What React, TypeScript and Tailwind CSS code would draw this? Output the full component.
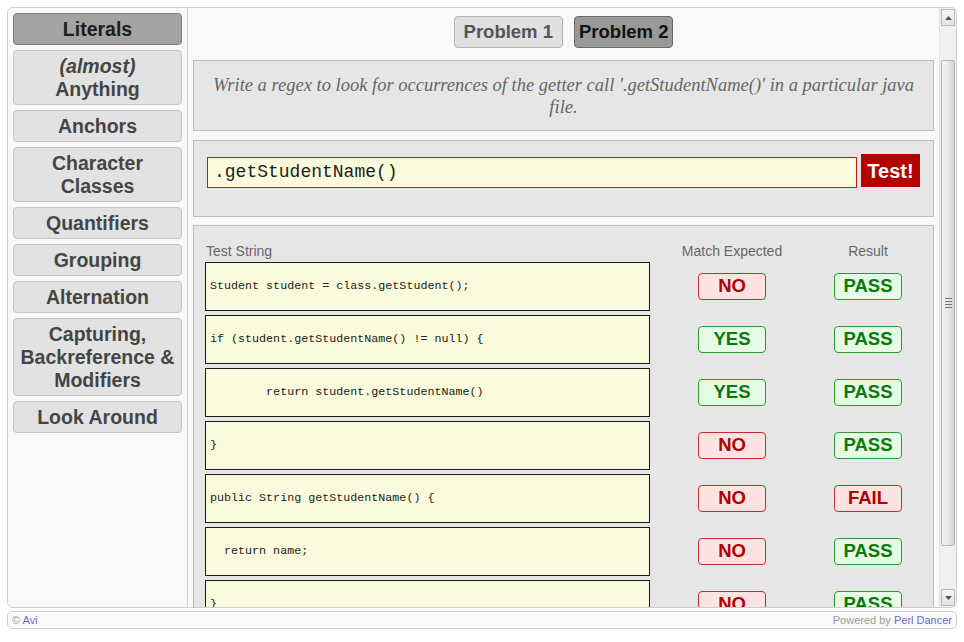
import React from "react";

type Row = { text: string; expected: "YES" | "NO"; result: "PASS" | "FAIL" };

const rows: Row[] = [
  { text: "Student student = class.getStudent();", expected: "NO", result: "PASS" },
  { text: "if (student.getStudentName() != null) {", expected: "YES", result: "PASS" },
  { text: "        return student.getStudentName()", expected: "YES", result: "PASS" },
  { text: "}", expected: "NO", result: "PASS" },
  { text: "public String getStudentName() {", expected: "NO", result: "FAIL" },
  { text: "  return name;", expected: "NO", result: "PASS" },
  { text: "}", expected: "NO", result: "PASS" },
];

const topics: React.ReactNode[] = [
  "Anchors",
  <>Character<br />Classes</>,
  "Quantifiers",
  "Grouping",
  "Alternation",
  <>Capturing,<br />Backreference &amp;<br />Modifiers</>,
  "Look Around",
];

const Badge = ({ label }: { label: string }) => {
  const good = label === "YES" || label === "PASS";
  return (
    <div
      className={
        "w-[68px] h-[27px] rounded-[4px] border flex items-center justify-center text-[18.5px] font-bold leading-none " +
        (good
          ? "bg-[#e6fbe6] border-[#2a9a2a] text-[#0a7a0a]"
          : "bg-[#fde2e2] border-[#c03030] text-[#b00000]")
      }
    >
      {label}
    </div>
  );
};

const Scrollbar = () => (
  <div className="w-[17px] h-full flex flex-col bg-[#f0f0f0] border-l border-[#e2e2e2]">
    <div className="h-[17px] mx-[1px] mt-[1px] border border-[#b8b8b8] bg-gradient-to-b from-[#f8f8f8] to-[#e2e2e2] flex items-center justify-center">
      <svg width="7" height="4" viewBox="0 0 7 4">
        <path d="M0 4 L3.5 0 L7 4 Z" fill="#555" />
      </svg>
    </div>
    <div className="h-[34px]" />
    <div className="h-[486px] mx-[1px] rounded-[2px] border border-[#b4b4b4] bg-gradient-to-r from-[#f4f4f4] via-[#e8e8e8] to-[#d4d4d4] flex items-center justify-center">
      <div className="flex flex-col gap-[2px]">
        <div className="w-[7px] h-px bg-[#777]" />
        <div className="w-[7px] h-px bg-[#777]" />
        <div className="w-[7px] h-px bg-[#777]" />
        <div className="w-[7px] h-px bg-[#777]" />
      </div>
    </div>
    <div className="flex-1" />
    <div className="h-[17px] mx-[1px] mb-[1px] border border-[#b8b8b8] bg-gradient-to-b from-[#f8f8f8] to-[#e2e2e2] flex items-center justify-center">
      <svg width="7" height="4" viewBox="0 0 7 4">
        <path d="M0 0 L3.5 4 L7 0 Z" fill="#555" />
      </svg>
    </div>
  </div>
);

export default function App() {
  return (
    <div className="w-[964px] h-[642px] bg-white p-[7px] font-['Liberation_Sans',Arial,sans-serif] overflow-hidden">
      <div className="h-[601px] flex border border-[#cfcfcf] rounded-[6px] bg-[#f9f9f9] overflow-hidden">
        {/* sidebar */}
        <div className="w-[180px] shrink-0 border-r border-[#d4d4d4] pt-[5px] pl-[5px] pr-[5px] flex flex-col gap-[5px]">
          <div className="rounded-[4px] border border-[#7c7c7c] bg-[#a3a3a3] text-[#1e1e1e] text-center font-bold text-[19.5px] leading-[23px] py-[3.5px]">
            Literals
          </div>
          <div className="rounded-[4px] border border-[#c4c4c4] bg-[#e2e2e2] text-[#454545] text-center font-bold text-[19.5px] leading-[23px] py-[3.5px]">
            <i>(almost)</i>
            <br />
            Anything
          </div>
          {topics.map((t, i) => (
            <div
              key={i}
              className="rounded-[4px] border border-[#c4c4c4] bg-[#e2e2e2] text-[#454545] text-center font-bold text-[19.5px] leading-[23px] py-[3.5px]"
            >
              {t}
            </div>
          ))}
        </div>

        {/* main */}
        <div className="w-[751px] shrink-0 h-full overflow-hidden px-[5px] pt-[8px]">
          <div className="flex justify-center gap-[11px]">
            <div className="h-[32px] px-[9px] rounded-[4px] border border-[#b4b4b4] bg-[#e0e0e0] text-[#555] font-bold text-[18.5px] flex items-center">
              Problem 1
            </div>
            <div className="h-[32px] px-[4px] rounded-[4px] border border-[#6a6a6a] bg-[#999999] text-[#111] font-bold text-[18.5px] flex items-center">
              Problem 2
            </div>
          </div>

          <div className="mt-[12px] h-[71px] border border-[#bdbdbd] bg-[#e6e6e6] flex items-center justify-center px-[12px] text-center italic text-[18.5px] leading-[22px] text-[#666] font-['Liberation_Serif',Georgia,serif]">
            Write a regex to look for occurrences of the getter call '.getStudentName()' in a particular java file.
          </div>

          <div className="mt-[9px] h-[77px] border border-[#bdbdbd] bg-[#e6e6e6] px-[13px] pt-[13px] flex items-start gap-[4px]">
            <div className="mt-[3px] w-[650px] h-[31px] border border-[#b02020] bg-[#fafadc] flex items-center pl-[6px] font-['Liberation_Mono',monospace] text-[18px] text-[#222]">
              .getStudentName()
            </div>
            <div className="w-[59px] h-[33px] bg-[#b30000] text-white font-bold text-[20px] flex items-center justify-center">
              Test!
            </div>
          </div>

          <div className="mt-[8px] border border-[#bdbdbd] bg-[#e6e6e6] px-[11px] pt-[15px] pb-[20px]">
            <div className="flex h-[20px] items-center text-[14px] text-[#666]">
              <div className="w-[445px] pl-px">Test String</div>
              <div className="w-[164px] text-center">Match Expected</div>
              <div className="w-[108px] text-center">Result</div>
            </div>
            <div className="mt-[1px] flex flex-col gap-[4px]">
              {rows.map((r, i) => (
                <div key={i} className="flex items-center h-[49px]">
                  <div className="w-[445px] h-[49px] border border-[#1a1a1a] bg-[#fafadc] flex items-center pl-[4px] font-['Liberation_Mono',monospace] text-[11.7px] text-[#222] whitespace-pre">
                    {r.text}
                  </div>
                  <div className="w-[164px] flex justify-center">
                    <Badge label={r.expected} />
                  </div>
                  <div className="w-[108px] flex justify-center">
                    <Badge label={r.result} />
                  </div>
                </div>
              ))}
            </div>
          </div>
        </div>

        <Scrollbar />
      </div>

      <div className="mt-[3px] h-[18px] border border-[#cfcfcf] rounded-[5px] bg-[#f9f9f9] flex items-center justify-between px-[4px] text-[11px] text-[#999]">
        <span>
          © <span className="text-[#6b6bd0]">Avi</span>
        </span>
        <span>
          Powered by <span className="text-[#6b6bd0]">Perl Dancer</span>
        </span>
      </div>
    </div>
  );
}
